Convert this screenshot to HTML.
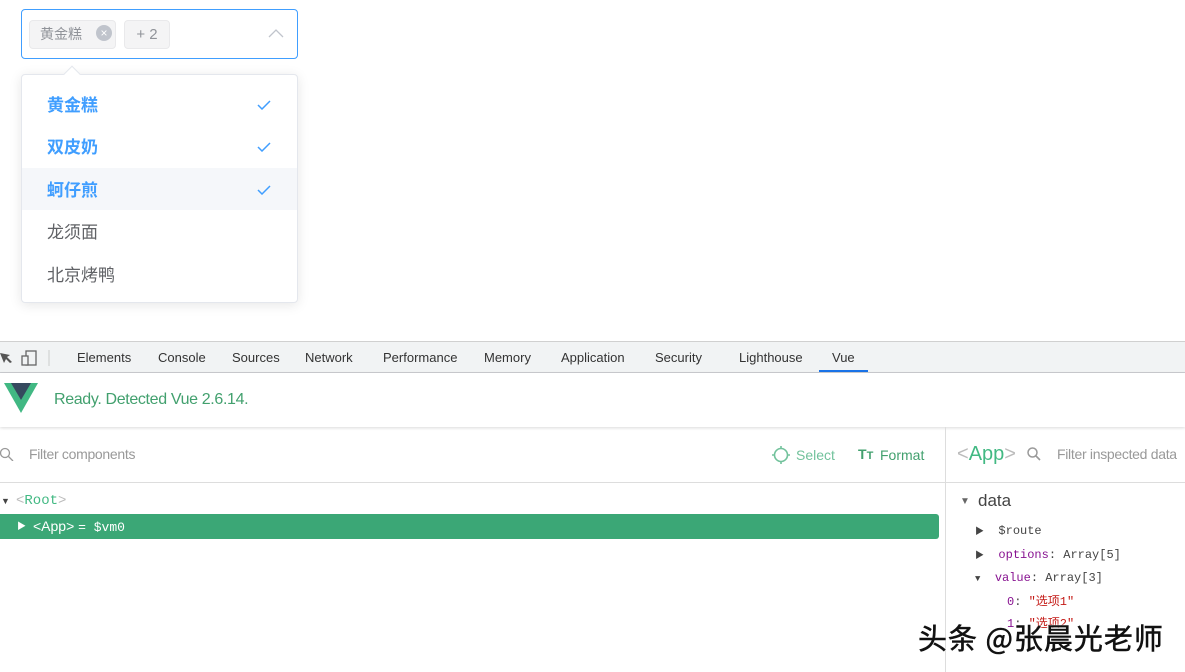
<!DOCTYPE html>
<html><head><meta charset="utf-8"><style>
*{margin:0;padding:0;box-sizing:border-box}
body{width:1185px;height:672px;overflow:hidden;background:#fff;position:relative;font-family:"Liberation Sans","Noto Sans CJK SC",sans-serif}
.a{position:absolute;white-space:nowrap}
.cjk{font-family:"Noto Sans CJK SC","Liberation Sans",sans-serif}
.mono{font-family:"Liberation Mono","Noto Sans CJK SC",monospace}
.it{position:absolute;left:22px;width:275px;height:42px;line-height:42px;padding-left:25px;font-size:17px}
.sel{color:#409eff;font-weight:bold}
.ck{position:absolute;right:26px;top:-1px}
.tab{position:absolute;top:350px;font-size:13px;color:#333}
</style></head><body>
<div class="a" style="left:21px;top:9px;width:277px;height:50px;border:1px solid #409eff;border-radius:4px"></div>
<div class="a cjk" style="left:29px;top:20px;width:87px;height:29px;background:#f4f4f5;border:1px solid #e9e9eb;border-radius:4px;font-size:14px;color:#909399;line-height:27px;padding-left:10px">黄金糕</div>
<div class="a" style="left:96px;top:25px;width:16px;height:16px;border-radius:50%;background:#c0c4cc;color:#fff;font-size:12px;line-height:16px;text-align:center">×</div>
<div class="a" style="left:124px;top:20px;width:46px;height:29px;background:#f4f4f5;border:1px solid #e9e9eb;border-radius:4px;font-size:15px;color:#909399;line-height:27px;text-align:center">+ 2</div>
<svg class="a" style="left:268px;top:29px" width="16" height="10"><path d="M1 8 L8 1 L15 8" fill="none" stroke="#c0c4cc" stroke-width="1.3"/></svg>
<div class="a" style="left:21px;top:74px;width:277px;height:229px;border:1px solid #e4e7ed;border-radius:4px;box-shadow:0 2px 12px rgba(0,0,0,.1);background:#fff"></div>
<div class="a" style="left:66px;top:68px;width:12px;height:12px;background:#fff;border-left:1px solid #e4e7ed;border-top:1px solid #e4e7ed;transform:rotate(45deg)"></div>
<div class="it cjk sel" style="top:83px">黄金糕<span class="ck"><svg width="14" height="10"><path d="M1 5 L5 9 L13 1" fill="none" stroke="#409eff" stroke-width="1.5"/></svg></span></div>
<div class="it cjk sel" style="top:125px">双皮奶<span class="ck"><svg width="14" height="10"><path d="M1 5 L5 9 L13 1" fill="none" stroke="#409eff" stroke-width="1.5"/></svg></span></div>
<div class="it cjk sel" style="top:168px;background:#f5f7fa">蚵仔煎<span class="ck"><svg width="14" height="10"><path d="M1 5 L5 9 L13 1" fill="none" stroke="#409eff" stroke-width="1.5"/></svg></span></div>
<div class="it cjk" style="top:210px;color:#606266">龙须面</div>
<div class="it cjk" style="top:253px;color:#606266">北京烤鸭</div>
<div class="a" style="left:0;top:341px;width:1185px;height:32px;background:#f1f3f4;border-top:1px solid #d0d0d0;border-bottom:1px solid #cbcdd1"></div>
<svg class="a" style="left:0;top:348px" width="50" height="20"><path d="M0 5 L10 7 L7 9 L12 14 L10 15 L6 11 L4 15 Z" fill="#555"/><rect x="26" y="3" width="10" height="14" fill="none" stroke="#666" stroke-width="1.3"/><rect x="22" y="8" width="6" height="9" fill="#f1f3f4" stroke="#666" stroke-width="1.3"/><line x1="49" y1="2" x2="49" y2="18" stroke="#ccc"/></svg>
<div class="tab" style="left:77px">Elements</div>
<div class="tab" style="left:158px">Console</div>
<div class="tab" style="left:232px">Sources</div>
<div class="tab" style="left:305px">Network</div>
<div class="tab" style="left:383px">Performance</div>
<div class="tab" style="left:484px">Memory</div>
<div class="tab" style="left:561px">Application</div>
<div class="tab" style="left:655px">Security</div>
<div class="tab" style="left:739px">Lighthouse</div>
<div class="tab" style="left:832px">Vue</div>
<div class="a" style="left:819px;top:370px;width:49px;height:2px;background:#1a73e8"></div>
<div class="a" style="left:0;top:373px;width:1185px;height:54px;background:#fff;box-shadow:0 1px 3px rgba(0,0,0,.15)"></div>
<svg class="a" style="left:4px;top:383px" width="34" height="30"><path d="M0 0 L34 0 L17 30 Z" fill="#41b883"/><path d="M7 0 L27 0 L17 17 Z" fill="#35495e"/></svg>
<div class="a" style="left:54px;top:391px;font-size:16px;color:#42a06e;letter-spacing:-0.35px">Ready. Detected Vue 2.6.14.</div>
<div class="a" style="left:0;top:482px;width:1185px;height:1px;background:#ddd"></div>
<div class="a" style="left:945px;top:427px;width:1px;height:245px;background:#ddd"></div>
<svg class="a" style="left:0;top:447px" width="14" height="14"><circle cx="5" cy="6" r="4.5" fill="none" stroke="#999" stroke-width="1.3"/><line x1="8.5" y1="9.5" x2="13" y2="14" stroke="#999" stroke-width="1.3"/></svg>
<div class="a" style="left:29px;top:446px;font-size:14px;color:#999;letter-spacing:-0.3px">Filter components</div>
<svg class="a" style="left:772px;top:446px" width="18" height="18"><circle cx="9" cy="9" r="6.5" fill="none" stroke="#72c29c" stroke-width="1.6"/><path d="M9 0v3M9 15v3M0 9h3M15 9h3" stroke="#72c29c" stroke-width="1.6"/></svg>
<div class="a" style="left:796px;top:447px;font-size:14px;color:#72c29c">Select</div>
<div class="a" style="left:858px;top:446px;font-size:14px;font-weight:bold;color:#42a06e">T<span style="font-size:11px">T</span></div>
<div class="a" style="left:880px;top:447px;font-size:14px;color:#42a06e">Format</div>
<div class="a" style="left:957px;top:443px;font-size:20px;color:#42b983"><span style="color:#bbb">&lt;</span>App<span style="color:#bbb">&gt;</span></div>
<svg class="a" style="left:1027px;top:447px" width="14" height="14"><circle cx="5.5" cy="5.5" r="4.5" fill="none" stroke="#999" stroke-width="1.5"/><line x1="9" y1="9" x2="13" y2="13" stroke="#999" stroke-width="1.6"/></svg>
<div class="a" style="left:1057px;top:446px;font-size:14px;color:#999;letter-spacing:-0.3px">Filter inspected data</div>
<div class="a" style="left:1px;top:496px;font-size:9px;color:#444">▼</div>
<div class="a mono" style="left:16px;top:493px;font-size:14px;color:#42b983"><span style="color:#bbb">&lt;</span>Root<span style="color:#bbb">&gt;</span></div>
<div class="a" style="left:0;top:514px;width:939px;height:25px;background:#3ba776;border-radius:0 3px 3px 0"></div>
<div class="a" style="left:17px;top:519px;font-size:9px;color:#fff">▶</div>
<div class="a" style="left:33px;top:518px;font-size:14px;color:#fff">&lt;App&gt; <span class="mono" style="font-size:13px">= $vm0</span></div>
<div class="a" style="left:960px;top:496px;font-size:10px;color:#666">▼</div>
<div class="a" style="left:978px;top:491px;font-size:17px;color:#444">data</div>
<div class="a mono" style="left:975px;top:520px;font-size:12px;line-height:22.5px;color:#444">
<div><span style="font-size:9px">▶</span> &nbsp;$route</div>
<div><span style="font-size:9px">▶</span> &nbsp;<span style="color:#881391">options</span>: Array[5]</div>
<div><span style="font-size:9px">▼</span> &nbsp;<span style="color:#881391">value</span>: Array[3]</div>
<div style="padding-left:32px"><span style="color:#881391">0</span>: <span style="color:#c41a16">"选项1"</span></div>
<div style="padding-left:32px"><span style="color:#881391">1</span>: <span style="color:#c41a16">"选项2"</span></div>
</div>
<div class="a cjk" style="left:918px;top:616px;font-size:29px;letter-spacing:1px;color:#111;-webkit-text-stroke:0.5px #111;text-shadow:0 0 2px #fff,0 0 2px #fff">头条 @张晨光老师</div>
</body></html>
